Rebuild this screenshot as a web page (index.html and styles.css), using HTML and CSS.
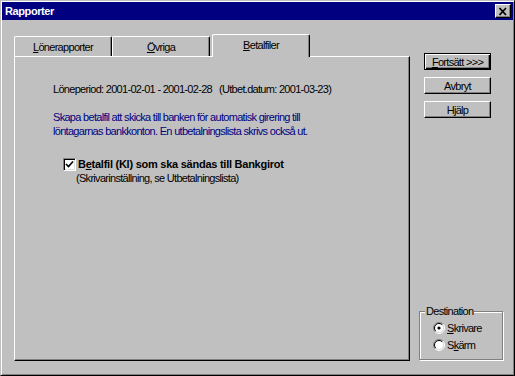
FILE: index.html
```html
<!DOCTYPE html>
<html>
<head>
  <title>Rapporter</title>
  <link rel="stylesheet" href="styles.css">
</head>
<body>
  <div class="window">
    <div class="titlebar">
      <span class="title">Rapporter</span>
      <span class="close-btn">
        <svg width="10" height="9" viewBox="0 0 10 9">
          <path d="M1.5 1l6.5 7M8 1L1.5 8" stroke="#000" stroke-width="1.8" fill="none"/>
        </svg>
      </span>
    </div>

    <div class="client">
      <div class="left">
        <div class="tabs">
          <div class="tab"><u>L</u>önerapporter</div>
          <div class="tab"><u>Ö</u>vriga</div>
          <div class="tab active"><u>B</u>etalfiler</div>
        </div>
        <div class="panel">
          <p class="period">Löneperiod: 2001-02-01 - 2001-02-28&nbsp;&nbsp;&nbsp;(Utbet.datum: 2001-03-23)</p>
          <p class="info">Skapa betalfil att skicka till banken för automatisk girering till<br>löntagarnas bankkonton. En utbetalningslista skrivs också ut.</p>
          <div class="check-row">
            <span class="checkbox">
              <svg width="9" height="9" viewBox="0 0 9 9">
                <polyline points="1,4 3.5,6.5 8,1.5" stroke="#000" stroke-width="1.7" fill="none"/>
              </svg>
            </span>
            <span class="check-label">B<u>e</u>talfil (Kl) som ska sändas till Bankgirot</span>
          </div>
          <p class="hint">(Skrivarinställning, se Utbetalningslista)</p>
        </div>
      </div>

      <div class="side">
        <div class="buttons">
          <div class="btn default"><u>F</u>ortsätt &gt;&gt;&gt;</div>
          <div class="btn">Avbryt</div>
          <div class="btn">Hjälp</div>
        </div>
        <fieldset class="group">
          <legend>Destination</legend>
          <div class="radio-row">
            <svg width="12" height="12" viewBox="0 0 12 12">
              <circle cx="6" cy="6" r="4.5" fill="#fff"/>
              <path d="M2.1 9.9A5.5 5.5 0 0 1 9.9 2.1" stroke="#808080" fill="none"/>
              <path d="M9.9 2.1A5.5 5.5 0 0 1 2.1 9.9" stroke="#fff" fill="none"/>
              <path d="M2.8 9.2A4.5 4.5 0 0 1 9.2 2.8" stroke="#000" fill="none"/>
              <path d="M9.2 2.8A4.5 4.5 0 0 1 2.8 9.2" stroke="#dfdfdf" fill="none"/>
              <circle cx="6" cy="6" r="1.6" fill="#000"/>
            </svg>
            <span><u>S</u>krivare</span>
          </div>
          <div class="radio-row">
            <svg width="12" height="12" viewBox="0 0 12 12">
              <circle cx="6" cy="6" r="4.5" fill="#fff"/>
              <path d="M2.1 9.9A5.5 5.5 0 0 1 9.9 2.1" stroke="#808080" fill="none"/>
              <path d="M9.9 2.1A5.5 5.5 0 0 1 2.1 9.9" stroke="#fff" fill="none"/>
              <path d="M2.8 9.2A4.5 4.5 0 0 1 9.2 2.8" stroke="#000" fill="none"/>
              <path d="M9.2 2.8A4.5 4.5 0 0 1 2.8 9.2" stroke="#dfdfdf" fill="none"/>
            </svg>
            <span>S<u>k</u>ärm</span>
          </div>
        </fieldset>
      </div>
    </div>
  </div>
</body>
</html>
```

FILE: styles.css
```css
body {
  margin: 0;
  font-family: "Liberation Sans", Arial, sans-serif;
  font-size: 11px;
  letter-spacing: -0.7px;
  color: #000;
}

p {
  margin: 0;
}

u {
  text-decoration-thickness: 1px;
  text-underline-offset: 1px;
}

.window {
  width: 515px;
  height: 376px;
  box-sizing: border-box;
  background: #c0c0c0;
  border: 1px solid;
  border-color: #c0c0c0 #000 #000 #c0c0c0;
  box-shadow: inset 1px 1px #fff, inset -1px -1px #808080;
  padding: 1px;
  display: flex;
  flex-direction: column;
}

.titlebar {
  height: 18px;
  background: #000080;
  color: #fff;
  display: flex;
  align-items: center;
  justify-content: space-between;
  padding: 0 2px 0 3px;
}

.title {
  font-weight: bold;
  letter-spacing: -0.4px;
}

.close-btn {
  width: 16px;
  height: 14px;
  box-sizing: border-box;
  background: #c0c0c0;
  border: 1px solid;
  border-color: #fff #000 #000 #fff;
  box-shadow: inset -1px -1px #808080;
  display: flex;
  align-items: center;
  justify-content: center;
}

.client {
  flex: 1;
  display: flex;
  padding: 14px 0 0 12px;
}

.left {
  width: 396px;
  display: flex;
  flex-direction: column;
  padding-bottom: 13px;
}

.tabs {
  display: flex;
  align-items: flex-end;
  height: 22px;
}

.tab {
  width: 98px;
  height: 20px;
  box-sizing: border-box;
  border-top: 1px solid #fff;
  border-left: 1px solid #fff;
  border-right: 1px solid #000;
  border-radius: 2px 2px 0 0;
  box-shadow: inset -1px 0 #808080;
  display: flex;
  align-items: center;
  justify-content: center;
}

.tab.active {
  height: 23px;
  margin-bottom: -1px;
  margin-left: 2px;
  background: #c0c0c0;
  position: relative;
  z-index: 1;
  padding-bottom: 2px;
}

.panel {
  flex: 1;
  box-sizing: border-box;
  border: 1px solid;
  border-color: #fff #000 #000 #fff;
  box-shadow: inset -1px -1px #808080;
  padding: 25px 0 0 38px;
  line-height: 14px;
}

.info {
  color: #000080;
  margin-top: 14px;
}

.check-row {
  display: flex;
  align-items: center;
  margin: 19px 0 0 10px;
}

.checkbox {
  width: 13px;
  height: 13px;
  box-sizing: border-box;
  background: #fff;
  border: 1px solid;
  border-color: #808080 #fff #fff #808080;
  box-shadow: inset 1px 1px #000, inset -1px -1px #dfdfdf;
  display: flex;
  align-items: center;
  justify-content: center;
  margin-right: 2px;
}

.check-label {
  font-weight: bold;
  letter-spacing: -0.25px;
}

.hint {
  margin: 0 0 0 23px;
}

.side {
  width: 84px;
  margin-left: 9px;
  display: flex;
  flex-direction: column;
}

.buttons {
  display: flex;
  flex-direction: column;
  gap: 7px;
  margin: 19px 0 0 5px;
}

.btn {
  width: 67px;
  height: 17px;
  box-sizing: border-box;
  border: 1px solid;
  border-color: #fff #000 #000 #fff;
  box-shadow: inset -1px -1px #808080;
  display: flex;
  align-items: center;
  justify-content: center;
}

.btn.default {
  border-color: #000;
  box-shadow: inset 1px 1px #fff, inset -1px -1px #000, inset -2px -2px #808080;
}

.group {
  margin: auto 0 14px 0;
  padding: 2px 0 6px 13px;
  border: 1px solid #808080;
  box-shadow: inset 1px 1px #fff, 1px 1px #fff;
}

.group legend {
  padding: 0 1px;
  margin-left: -8px;
  background: #c0c0c0;
}

.radio-row {
  display: flex;
  align-items: center;
  gap: 2px;
  height: 17px;
}
```
